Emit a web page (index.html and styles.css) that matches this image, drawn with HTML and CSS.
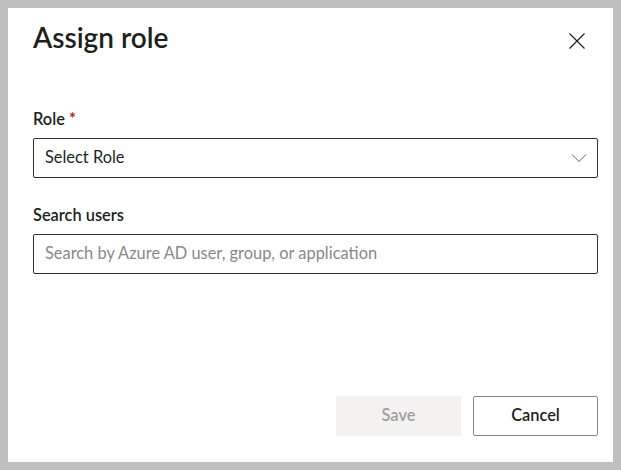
FILE: index.html
```html
<!DOCTYPE html>
<html>
<head>
<meta charset="utf-8">
<link rel="stylesheet" href="styles.css">
</head>
<body>
<div class="dialog">
  <div class="header">
    <h1 class="title">Assign role</h1>
    <button class="close" aria-label="Close">
      <svg width="16" height="16" viewBox="0 0 16 16"><path d="M0.5 0.5 L15.5 15.5 M15.5 0.5 L0.5 15.5" stroke="#201f1e" stroke-width="1.2" fill="none"/></svg>
    </button>
  </div>
  <div class="body">
    <div class="field">
      <label class="label">Role <span class="req">*</span></label>
      <div class="select">
        <span>Select Role</span>
        <svg width="16" height="10" viewBox="0 0 16 10"><path d="M1 1.5 L8 8.5 L15 1.5" stroke="#605e5c" stroke-width="1" fill="none"/></svg>
      </div>
    </div>
    <div class="field">
      <label class="label">Search users</label>
      <div class="input"><span class="placeholder">Search by Azure AD user, group, or application</span></div>
    </div>
  </div>
  <div class="footer">
    <button class="btn btn-disabled">Save</button>
    <button class="btn btn-default">Cancel</button>
  </div>
</div>
</body>
</html>
```
FILE: styles.css
```css
html, body { margin: 0; padding: 0; }
body {
  background: #c0c0c0;
  padding: 8px;
  width: 605px;
  font-family: "Lato", "Noto Sans", sans-serif;
  color: #201f1e;
}
.dialog {
  background: #fff;
  width: 605px;
  height: 454px;
  box-sizing: border-box;
  padding: 0 15px 26px 25px;
  display: flex;
  flex-direction: column;
}
.header {
  display: flex;
  align-items: flex-start;
  justify-content: space-between;
  height: 100px;
}
.title {
  margin: 12px 0 0 0;
  font-size: 28px;
  font-weight: 600;
  line-height: 34px;
}
.close {
  background: none;
  border: none;
  padding: 0;
  margin: 25px 13px 0 0;
  width: 16px;
  height: 16px;
  display: flex;
}
.body { flex: 1; display: flex; flex-direction: column; gap: 26px; }
.field { display: flex; flex-direction: column; width: 565px; }
.label { font-size: 16.4px; font-weight: 600; line-height: 22px; margin-bottom: 8px; }
.req { color: #a4262c; }
.select, .input {
  height: 40px;
  box-sizing: border-box;
  border: 1px solid #323130;
  border-radius: 2px;
  display: flex;
  align-items: center;
  justify-content: space-between;
  padding: 0 10px 0 11px;
  font-size: 16.4px;
}
.select span, .input span { margin-top: -3px; }
.placeholder { color: #8a8886; }
.footer { display: flex; justify-content: flex-end; gap: 12px; width: 565px; }
.btn {
  width: 125px;
  height: 40px;
  border-radius: 2px;
  font-family: inherit;
  font-size: 16.4px;
  font-weight: 600;
  padding: 0 0 4px 0;
}
.btn-disabled { background: #f3f2f1; color: #a19f9d; border: none; }
.btn-default { background: #fff; color: #201f1e; border: 1px solid #8a8886; }
```
